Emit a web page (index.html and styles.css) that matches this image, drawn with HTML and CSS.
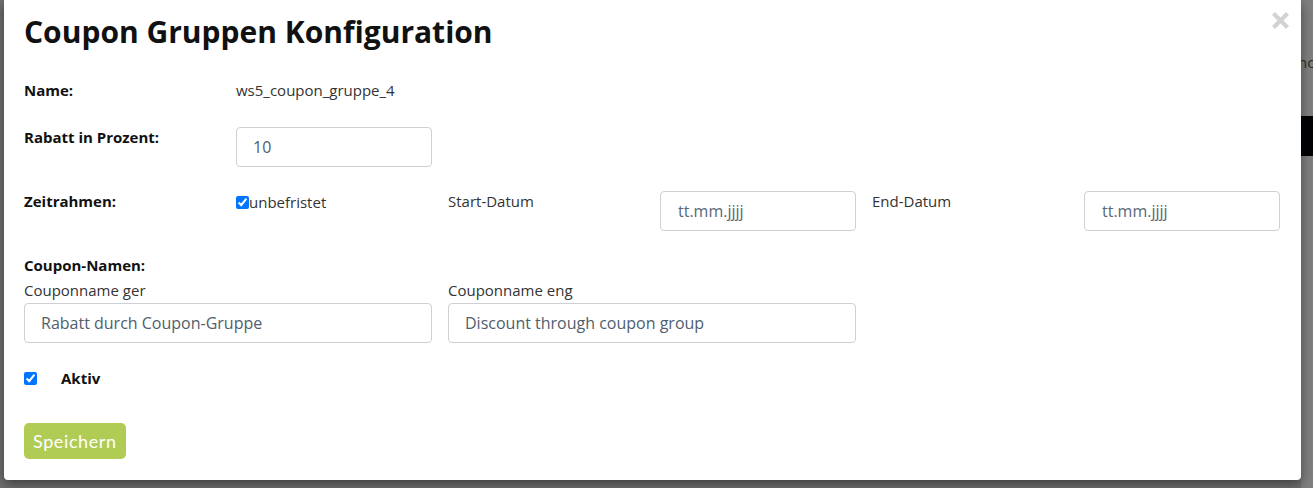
FILE: index.html
```html
<!DOCTYPE html>
<html lang="de">
<head>
    <meta charset="UTF-8">
    <title>Coupon Gruppen Konfiguration</title>
    <link rel="stylesheet" href="styles.css">
</head>
<body>
    <div class="backdrop">
        <div class="modal">
            <button class="modal-close" type="button" aria-label="Schließen">
                <svg width="19" height="19" viewBox="0 0 19 19">
                    <path d="M2.5 2.5 L16.5 16.5 M16.5 2.5 L2.5 16.5" stroke="#d2d2d2" stroke-width="4.2" stroke-linecap="butt"/>
                </svg>
            </button>
            <h1 class="modal-title">Coupon Gruppen Konfiguration</h1>

            <form class="coupon-form">
                <div class="form-row">
                    <div class="form-label">Name:</div>
                    <div class="form-value">ws5_coupon_gruppe_4</div>
                </div>

                <div class="form-row">
                    <div class="form-label">Rabatt in Prozent:</div>
                    <input class="form-input" type="text" value="10">
                </div>

                <div class="form-row">
                    <div class="form-label">Zeitrahmen:</div>
                    <label class="check-inline"><input type="checkbox" checked>unbefristet</label>
                    <div class="form-text">Start-Datum</div>
                    <input class="form-input date-input" type="text" value="tt.mm.jjjj">
                    <div class="form-text">End-Datum</div>
                    <input class="form-input date-input" type="text" value="tt.mm.jjjj">
                </div>

                <div class="form-label names-label">Coupon-Namen:</div>
                <div class="form-row names-row">
                    <div class="name-field">
                        <div class="form-text">Couponname ger</div>
                        <input class="form-input" type="text" value="Rabatt durch Coupon-Gruppe">
                    </div>
                    <div class="name-field">
                        <div class="form-text">Couponname eng</div>
                        <input class="form-input" type="text" value="Discount through coupon group">
                    </div>
                </div>

                <div class="active-row">
                    <input type="checkbox" checked>
                    <span class="form-label">Aktiv</span>
                </div>

                <button class="save-button" type="button">Speichern</button>
            </form>
        </div>

        <div class="page-peek">
            <div class="peek-text">nc</div>
            <div class="peek-bar"></div>
        </div>
    </div>
</body>
</html>
```

FILE: styles.css
```css
* {
    margin: 0;
    padding: 0;
    box-sizing: border-box;
}

body {
    font-family: "Open Sans", "Liberation Sans", Arial, sans-serif;
    font-size: 15px;
    line-height: 21px;
    color: #212529;
    background-color: #6f6f6f;
    overflow: hidden;
}

.backdrop {
    display: flex;
    align-items: flex-start;
    height: 488px;
    padding-left: 4px;
}

.modal {
    position: relative;
    width: 1297px;
    flex-shrink: 0;
    height: 480px;
    background: #ffffff;
    padding: 14px 21px 20px 20px;
    border-radius: 0 0 4px 4px;
    box-shadow: 0 4px 12px rgba(0, 0, 0, 0.45);
    z-index: 1;
}

.modal-close {
    position: absolute;
    top: 11px;
    right: 11px;
    width: 19px;
    height: 19px;
    border: none;
    background: none;
    cursor: pointer;
}

.modal-close svg {
    display: block;
}

.modal-title {
    font-size: 30px;
    line-height: 36px;
    font-weight: 700;
    color: #111111;
    margin-bottom: 30px;
}

.form-row {
    display: grid;
    grid-template-columns: repeat(6, 196px);
    column-gap: 16px;
    align-items: start;
    margin-bottom: 24px;
}

.form-row:first-child {
    margin-bottom: 26px;
}

.form-label {
    font-weight: 700;
    color: #111111;
}

.form-value,
.form-text {
    color: #333333;
}

.form-input {
    width: 100%;
    height: 40px;
    padding: 0 16px;
    border: 1px solid #cdd1d5;
    border-radius: 4px;
    font-family: inherit;
    font-size: 16px;
    color: #4f5e6e;
    background: #ffffff;
}

.form-input.date-input {
    padding-left: 17px;
    color: #5a6878;
}

.check-inline {
    display: flex;
    align-items: center;
    color: #333333;
    padding-top: 1px;
}

input[type="checkbox"] {
    width: 13px;
    height: 13px;
    margin: 0;
    accent-color: #0075ff;
}

.names-label {
    margin-bottom: 4px;
}

.names-row {
    margin-bottom: 25px;
}

.name-field {
    grid-column: span 2;
}

.name-field .form-text {
    margin-bottom: 2px;
}

.active-row {
    display: flex;
    align-items: center;
    gap: 24px;
    height: 21px;
    margin-bottom: 34px;
}

.save-button {
    display: block;
    height: 36px;
    padding: 0 9px;
    border: none;
    border-radius: 5px;
    background: #b1cc55;
    color: #ffffff;
    font-family: Lato, "Noto Sans", sans-serif;
    font-size: 18px;
    letter-spacing: 0.6px;
    cursor: pointer;
}

.page-peek {
    flex-grow: 1;
    overflow: hidden;
    background: #7f7f7f;
    height: 488px;
    padding-top: 52px;
}

.peek-text {
    margin-left: -3px;
    font-size: 15px;
    color: #2b2b2b;
    white-space: nowrap;
}

.peek-bar {
    margin-top: 43px;
    height: 40px;
    background: #020305;
}
```
